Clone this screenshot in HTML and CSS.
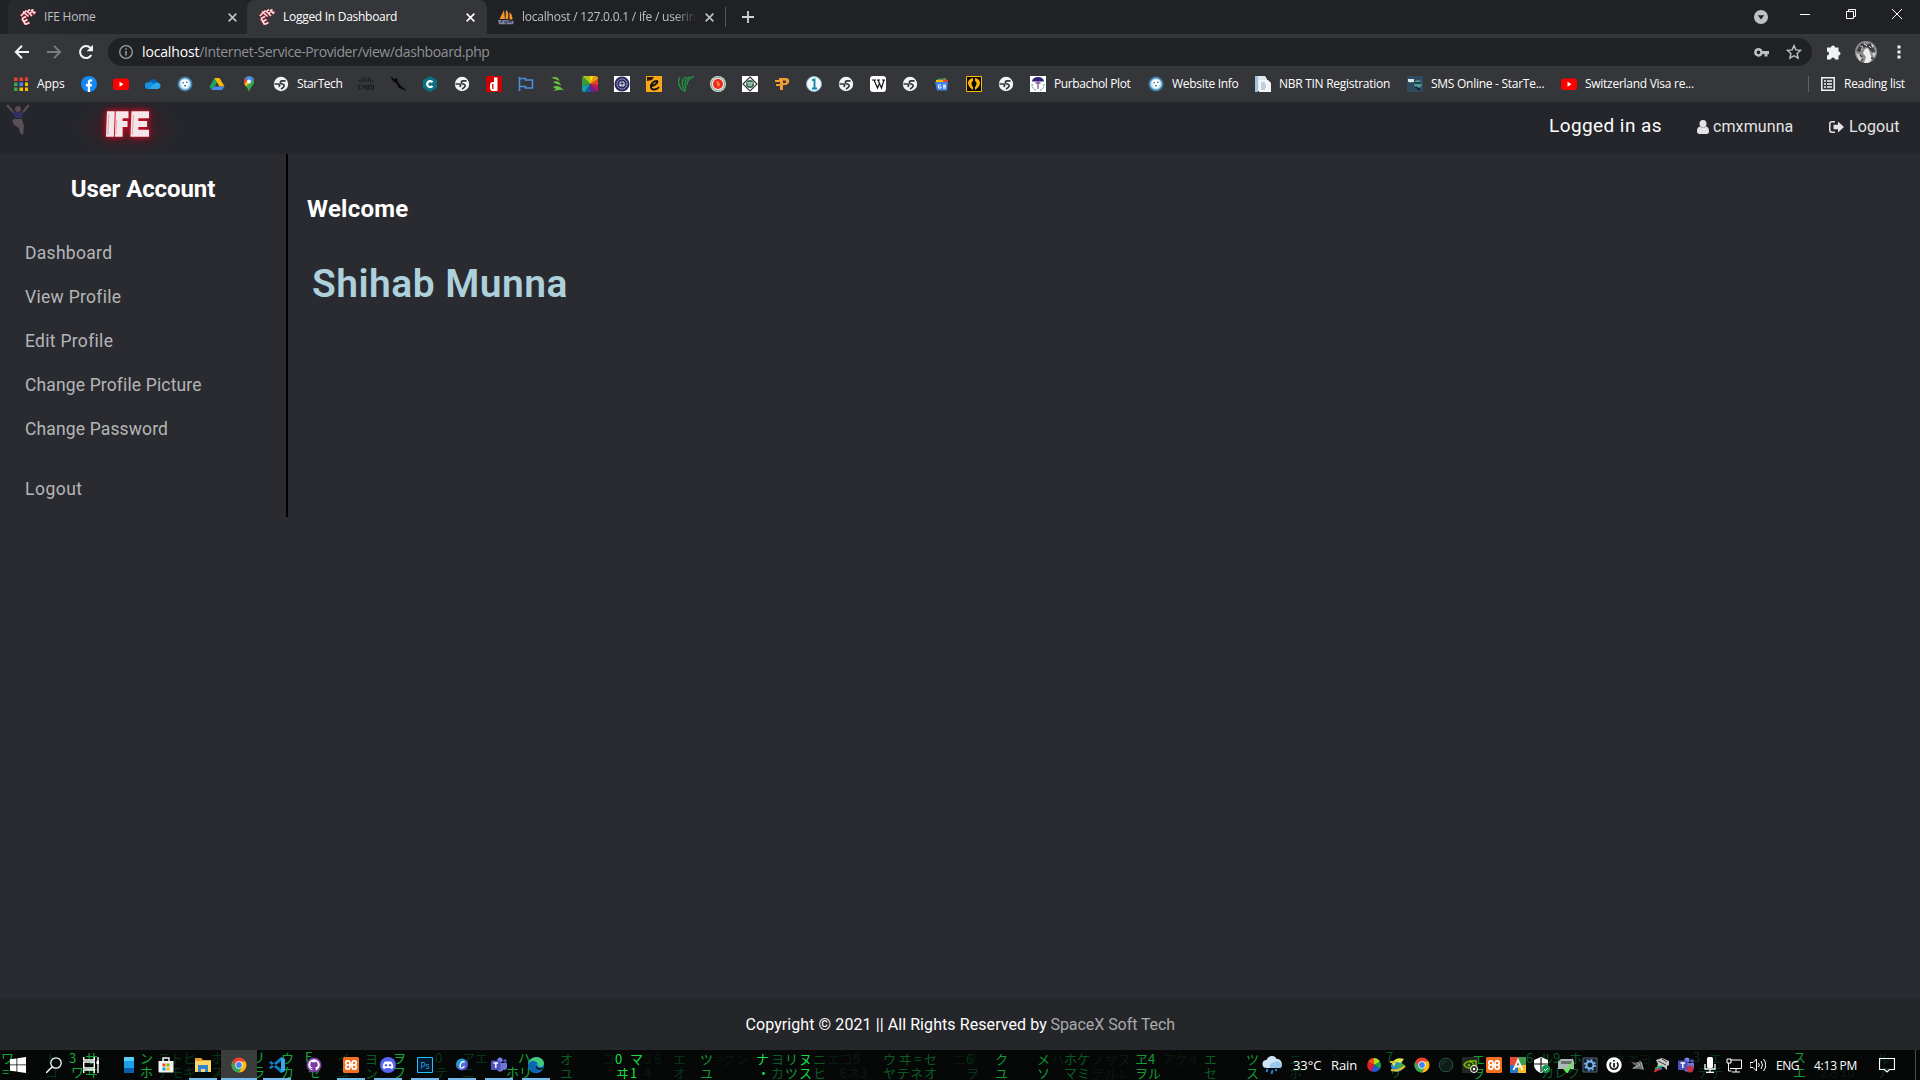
FILE: index.html
```html
<!DOCTYPE html>
<html lang="en">
<head>
<meta charset="utf-8">
<title>Logged In Dashboard</title>
<link rel="stylesheet" href="styles.css">
</head>
<body>
<svg class="defs" width="0" height="0" aria-hidden="true">
  <symbol id="ife" viewBox="0 0 16 16"><g fill="none" stroke="#8a1d29" stroke-width="3.200"><path d="M.8 7L6.500 1.500M3 2.500l5.500 5M7 2l5 5M7.500 2.500L10 .5M9.500 5l2-2M11 1l4 4M11.500 1.500l2-1M13 4l2.500-1M2 9.500l3.500 6M2 9.500l4-2M4 12.500l3.500-2M5.500 15.500l4-2"/></g><g fill="none" stroke="#f8e3e4" stroke-width="1.600"><path d="M.8 7L6.500 1.500M3 2.500l5.500 5M7 2l5 5M7.500 2.500L10 .5M9.500 5l2-2M11 1l4 4M11.500 1.500l2-1M13 4l2.500-1M2 9.500l3.500 6M2 9.500l4-2M4 12.500l3.500-2M5.500 15.500l4-2"/></g></symbol>
  <symbol id="x" viewBox="0 0 10 10"><path d="M1.500 1.500l7 7M8.500 1.500l-7 7" stroke="currentColor" stroke-width="1.500" fill="none"/></symbol>
  <symbol id="globe" viewBox="0 0 16 16"><circle cx="8" cy="8" r="7.200" fill="#f1f3f4"/><path d="M12.500 4.800H9.300C7.500 4.800 6.500 6.500 8 7.500c1.500.8 3.200.7 3.200 2.300 0 1.500-1.500 2.200-3.200 3.200" fill="none" stroke="#35363a" stroke-width="1.700"/><path d="M1.500 8h3.800c1.700.2 2 2 .2 2.600" fill="none" stroke="#35363a" stroke-width="1.700"/></symbol>
  <symbol id="yt" viewBox="0 0 16 16"><rect y="2.500" width="16" height="11.500" rx="2.500" fill="#f00"/><path d="M6.500 5.700v5l4-2.500z" fill="#fff"/></symbol>
  <symbol id="orb" viewBox="0 0 16 16"><circle cx="8" cy="8" r="7.500" fill="#3c7ba9"/><circle cx="8" cy="8" r="5.800" fill="#b9dff0"/><path d="M4 5l3-1.500 4 .5 1 4-2.500 4.500L5 11z" fill="#fff"/><path d="M5.500 6h1.500v1.500H5.500zM9 5.500h1.500V7H9zM7 9h2v1.500H7z" fill="#51829c"/></symbol>
  <symbol id="chrome" viewBox="0 0 16 16"><circle cx="8" cy="8" r="7.500" fill="#ea4335"/><path d="M1.500 4.250A7.500 7.500 0 0 0 8 15.500L11.200 9.900 4.800 9.900Z" fill="#34a853"/><path d="M8 15.500A7.500 7.500 0 0 0 14.500 4.500H8L11.250 9.900Z" fill="#fbbc05"/><circle cx="8" cy="8" r="3.700" fill="#fff"/><circle cx="8" cy="8" r="2.900" fill="#4285f4"/></symbol>
  <symbol id="xampp" viewBox="0 0 16 16"><rect width="16" height="16" rx="1.500" fill="#f37021"/><path d="M8 8H4.800a2.100 2.100 0 1 1 2.100-2.600v5.200A2.100 2.100 0 1 1 4.800 8M8 8h3.200a2.100 2.100 0 1 0-2.100-2.600v5.200A2.100 2.100 0 1 0 11.200 8" stroke="#fff" stroke-width="1.700" fill="none"/></symbol>
  <symbol id="teams" viewBox="0 0 16 16"><circle cx="9" cy="3" r="2.600" fill="#7b83eb"/><circle cx="14" cy="4" r="1.800" fill="#5059c9"/><path d="M6 6h7v6a4 4 0 0 1-7 1zM13 6h3v4a3 3 0 0 1-3 3z" fill="#7077d6"/><rect y="3.500" width="9.500" height="9.500" rx="1" fill="#4b53bc"/><path d="M2.500 6h4.600M4.800 6v5" stroke="#fff" stroke-width="1.400"/></symbol>
</svg>

<div class="browser">
  <div class="tabstrip">
    <div class="tab first"><svg class="fav"><use href="#ife"/></svg><span class="title t1">IFE Home</span><svg class="close"><use href="#x"/></svg></div>
    <div class="tab active"><svg class="fav"><use href="#ife"/></svg><span class="title t2">Logged In Dashboard</span><svg class="close"><use href="#x"/></svg></div>
    <div class="tab third"><svg class="fav" viewBox="0 0 16 16"><path d="M6 1l1 9H1.500zM8 1c3 2 2.500 6 2 9H7.500zM11.500 3c2.500 2 3 5 3 7.500h-3z" fill="#f0952a"/><path d="M0 11l16 .2-1 4H1z" fill="#8084a6"/><path d="M3 14v-2h2M7 12v2h2v-2M11 14v-2h2v2" stroke="#33364e" fill="none"/></svg><span class="title t3">localhost / 127.0.0.1 / ife / userinfo</span><svg class="close"><use href="#x"/></svg></div>
    <span class="tabline"></span>
    <svg class="plus" viewBox="0 0 12 12"><path d="M6 0v12M0 6h12" stroke="#d0d2d5" stroke-width="1.800"/></svg>
    <div class="winctl">
      <svg class="wc1" viewBox="0 0 14 14"><circle cx="7" cy="7" r="7" fill="#bdc1c6"/><path d="M3.800 5.200h6.400L7 9.500z" fill="#202124"/></svg>
      <svg class="wc2" viewBox="0 0 10 10"><path d="M0 5.500h10" stroke="#fff"/></svg>
      <svg class="wc3" viewBox="0 0 10 10"><path d="M.5 2.500h7v7h-7zM2.500 2.500v-2h7v7h-2" stroke="#fff" fill="none"/></svg>
      <svg class="wc4" viewBox="0 0 10 10"><path d="M0 0l10 10M10 0L0 10" stroke="#fff"/></svg>
    </div>
  </div>

  <div class="toolbar">
    <svg class="nav" viewBox="0 0 16 16"><path d="M15 8H2M8 1.800L1.800 8 8 14.200" fill="none" stroke="#f1f3f4" stroke-width="2"/></svg>
    <svg class="nav" viewBox="0 0 16 16"><path d="M1 8h13M8 1.800L14.200 8 8 14.200" fill="none" stroke="#7b7c7f" stroke-width="1.800"/></svg>
    <svg class="nav" viewBox="0 0 16 16"><path d="M13.300 11A6 6 0 1 1 12.500 4" fill="none" stroke="#f1f3f4" stroke-width="2.100"/><path d="M15 .8v6.400H8.600z" fill="#f1f3f4"/></svg>
    <div class="omnibox">
      <svg class="info" viewBox="0 0 14 14"><circle cx="7" cy="7" r="6.300" fill="none" stroke="#9aa0a6" stroke-width="1.300"/><path d="M7 6v4.500M7 3.300v1.500" stroke="#9aa0a6" stroke-width="1.500"/></svg>
      <span class="url"><b>localhost</b>/Internet-Service-Provider/view/dashboard.php</span>
      <svg class="key" viewBox="0 0 15 9"><path fill-rule="evenodd" d="M4.500 0a4.300 4.300 0 0 1 4 2.900H15v3h-1.500V8.500h-3V5.900h-2A4.300 4.300 0 1 1 4.500 0zm0 2.600a1.800 1.800 0 1 0 0 3.600 1.800 1.800 0 0 0 0-3.600z" fill="#bdc1c6"/></svg>
      <svg class="star" viewBox="0 0 16 16"><path d="M8 1.600l1.900 4.300 4.700.5-3.500 3.100 1 4.600L8 11.700l-4.100 2.400 1-4.600-3.500-3.100 4.700-.5z" fill="none" stroke="#bdc1c6" stroke-width="1.400"/></svg>
    </div>
    <svg class="puzzle" viewBox="0 0 16 16"><path d="M1 3.500h4a2 2 0 1 1 4 0h3.500v4a2 2 0 1 1 0 4v4H9a2 2 0 0 0-4 0H1v-4a2 2 0 0 0 0-4z" fill="#f1f3f4"/></svg>
    <svg class="avatar" viewBox="0 0 22 22"><clipPath id="av"><circle cx="11" cy="11" r="11"/></clipPath><g clip-path="url(#av)"><path d="M0 0h22v22H0z" fill="#8b8d8d"/><path d="M4 5l3-3 4 2 5-2 3 5-1 5-3-3-3-3-4 1-3 4-3-1z" fill="#3c3e3f"/><path d="M10 8l3-1 2 5 2 6-3 4-5 0 2-6-3-4z" fill="#eeeeec"/><path d="M1 12l4 2 3 6-4 0zM16 2l3 3-2 2zM17 12l4 0-2 4" fill="#d0d1d0"/><path d="M5 14l2 2M2 9l3 1M18 9l2 1M16 17l3 1M6 20l2-2" stroke="#3c3e3f" stroke-width="1.500"/><path d="M5 5l3 1-2 3M9 3l3 2M14 5l2 2" fill="none" stroke="#ccc"/></g></svg>
    <svg class="dots" viewBox="0 0 4 16"><path d="M.5 1.500h3v3h-3zM.5 6.500h3v3h-3zM.5 11.500h3v3h-3z" fill="#f1f3f4"/></svg>
  </div>

  <div class="bookmarks">
    <div class="bm"><svg viewBox="0 0 16 16"><path d="M1 1.500h3.500V5H1zM6.500 1.500H10V5H6.500zM12 1.500h3V5h-3z" fill="#e94235"/><path d="M1 6.500h3.500V10H1zM1 11.500h3.500V15H1z" fill="#34a853"/><path d="M6.500 6.500H10V10H6.500z" fill="#4285f4"/><path d="M12 6.500h3V10h-3zM6.500 11.500H10V15H6.500zM12 11.500h3V15h-3z" fill="#fbbc05"/></svg><span class="w-apps">Apps</span></div>
    <svg viewBox="0 0 16 16"><circle cx="8" cy="8" r="8" fill="#1488f5"/><path d="M6.800 16v-5.600H4.900V8h1.900V6.400c0-2 1.100-3.100 2.900-3.100l1.500.1v2h-.9c-.9 0-1.200.5-1.200 1.200V8H11l-.4 2.400H9.100V16z" fill="#fff"/></svg>
    <svg><use href="#yt"/></svg>
    <svg viewBox="0 0 16 16"><path d="M4 6a4.300 4.300 0 0 1 8-.5L9 10z" fill="#0364b8"/><path d="M3 13a3.300 3.300 0 0 1 0-6.700l3-.3 7 4-5 3z" fill="#1490df"/><path d="M8 9l3-2.600A3.400 3.400 0 1 1 13 13H4z" fill="#28a8ea"/></svg>
    <svg><use href="#orb"/></svg>
    <svg viewBox="0 0 16 16"><path d="M5.500 2h5L5 11.500 2.800 14 .5 10.500z" fill="#1ea362"/><path d="M5.500 2h5l5 8.500h-5z" fill="#ffba00"/><path d="M5.300 10.500h10.200L13 14H2.800z" fill="#4688f4"/></svg>
    <svg viewBox="0 0 16 16"><path d="M8 .3a5.200 5.200 0 0 0-5 6.500C3.500 9 7 12 8 15.700c1-3.700 4.500-6.700 5-8.900A5.200 5.200 0 0 0 8 .3z" fill="#34a853"/><path d="M3 7a5.300 5.300 0 0 1 1-5L8 5.500 4.500 10z" fill="#ea4335"/><path d="M4 2a5.200 5.200 0 0 1 5.500-1.500L6 5z" fill="#4285f4"/><path d="M9.500.5A5.300 5.300 0 0 1 12.700 3L4.900 10.500 3.500 8z" fill="#fbbc05"/><path d="M9.500.5A5.300 5.300 0 0 1 12.700 3L9.500 7 6 5z" fill="#4285f4"/><circle cx="8" cy="5.500" r="1.900" fill="#fff"/></svg>
    <div class="bm"><svg><use href="#globe"/></svg><span class="w-star">StarTech</span></div>
    <svg viewBox="0 0 16 16"><path d="M1 4v2M3.300 2.500v3.500M5.600 1v5M8 3v3M10.300 1v5M12.600 2.500v3.500M15 4v2" stroke="#1c1d1f" stroke-width="1.100"/><path d="M3 9.500H1V13h2M5 9v4M9 9.500H7v1.700h2V13H7M12.500 9.500h-2V13h2M13.500 9.500h2V13h-2z" fill="none" stroke="#1c1d1f" stroke-width="1.200"/></svg>
    <svg viewBox="0 0 16 16"><path d="M0 0l4 3 3-1 1 4 3 4 4 3 1 2-4-2-3-1-2-4-4-3z" fill="#090909"/></svg>
    <svg viewBox="0 0 16 16"><path d="M8 0l7 4v8l-7 4-7-4V4z" fill="#0b7084"/><path d="M10.500 6.200A3 3 0 1 0 10.500 10" fill="none" stroke="#fff" stroke-width="2.200"/></svg>
    <svg><use href="#globe"/></svg>
    <svg viewBox="0 0 16 16"><path d="M0 0h16v16H0z" fill="#d00000"/><path d="M8 1.500h3.500V15H8zM8 6C4 5.500 4 8 4 10.500S4 15 8 15z" fill="#fff"/><path d="M6.800 8v5" stroke="#d00000" stroke-width="1.300"/></svg>
    <svg viewBox="0 0 16 16"><path d="M1.500 1v14M1.500 2.500h6v1.500h7v8h-7v-1.500h-6" fill="none" stroke="#4f8edb" stroke-width="1.600"/></svg>
    <svg viewBox="0 0 16 16"><path d="M1 1.500c5-1.500 8 0 8.500 3.500-3-2-5-1.500-8.500-3.500zM3 6c4-2 7 0 8 3.500C8 8 6 8 3 6zM3 11c4-2.500 8 0 11 3.500-4-1.500-6 0-11 .5l3-2z" fill="#6cc23c"/></svg>
    <svg viewBox="0 0 16 16"><clipPath id="r"><rect width="16" height="16" rx="2.500"/></clipPath><g clip-path="url(#r)"><path d="M0 0h8v8z" fill="#a9c51c"/><path d="M0 0l8 8-8 2z" fill="#3a9b35"/><path d="M0 10l8-2-5 8H0z" fill="#12a2a5"/><path d="M8 8L3 16h6z" fill="#1f57a7"/><path d="M8 8l1 8h7z" fill="#6b257f"/><path d="M8 8l8 8V9z" fill="#c4145c"/><path d="M8 8l8 1V3z" fill="#e7441c"/><path d="M8 8l8-5V0h-4z" fill="#f49b13"/><path d="M8 8l4-8H8z" fill="#fbd80a"/></g></svg>
    <svg viewBox="0 0 16 16"><path d="M0 0h16v16H0z" fill="#fff"/><circle cx="8" cy="8" r="7.500" fill="#28295f"/><circle cx="8" cy="8" r="5" fill="none" stroke="#c9cbe0" stroke-dasharray="1.500 .6"/><path d="M5 9h6M6 6h4v4H6z" stroke="#fff" fill="none" stroke-width=".8"/></svg>
    <svg viewBox="0 0 16 16"><path d="M0 0h16v16H0z" fill="#f9a61a"/><path d="M1 1h7L6 4 1 5z" fill="#2a1b09"/><path d="M5.500 10c5-1 7.500-5 5-5S4 8 5 11.500s6 2 8-.5" fill="none" stroke="#141414" stroke-width="1.900"/></svg>
    <svg viewBox="0 0 16 16"><path d="M8 15.500C1 13-1 6 2 1M8 14C3 10 3 4 8 .8M8 12C5.500 6 8 2 12 .8M9 9c0-4 2-7 7-8.500" fill="none" stroke="#219642" stroke-width="1.300"/></svg>
    <svg viewBox="0 0 16 16"><circle cx="8" cy="8" r="8" fill="#e5e3d7"/><circle cx="8" cy="8" r="6.700" fill="none" stroke="#247353" stroke-dasharray="1.200 .8"/><circle cx="8" cy="8" r="5" fill="#ee2722"/><path d="M6.500 5l2 .5 1.500 3-1 2.500-2-2z" fill="#f6842a"/></svg>
    <svg viewBox="0 0 16 16"><path d="M0 0h16v16H0z" fill="#fff"/><path d="M8 1l7 7-7 7-7-7z" fill="none" stroke="#333" stroke-width="1.200"/><circle cx="8" cy="8" r="4" fill="#376d51"/><path d="M5 7h6M6 9h4" stroke="#fff"/></svg>
    <svg viewBox="0 0 16 16"><path d="M5 2h7c5 0 4 7-1 7H9v5H6V6H1V4h4zm4 2.500v2.500h2c1.500 0 1.500-2.500 0-2.500zM2 8h4v2H2z" fill="#f29c34" fill-rule="evenodd"/></svg>
    <svg viewBox="0 0 16 16"><circle cx="8" cy="8" r="7.500" fill="#f4f8fa" stroke="#7bb8cc"/><path d="M6 4.500l2-1h.5V12M6 12.500h5" fill="none" stroke="#1386ad" stroke-width="1.900"/></svg>
    <svg><use href="#globe"/></svg>
    <svg viewBox="0 0 16 16"><rect width="16" height="16" rx="3" fill="#fff"/><path d="M2 4h4M7 4h3M12 4h3M4 4l3.500 8L9.500 7.500M8 4l3.500 8L14 4" fill="none" stroke="#111" stroke-width="1.200"/></svg>
    <svg><use href="#globe"/></svg>
    <svg viewBox="0 0 16 16"><path d="M3 3l9-1 1 7H4z" fill="#34a853"/><path d="M8 3l6 1-1 5H8z" fill="#ea4335"/><path d="M2 4h7v5H2z" fill="#fbbc05"/><path d="M1 6h13l-1 8.500H3z" fill="#3f83f1"/><path d="M7 9H4.500v3H7v-1.500M9 9h3M9 10.500h3M9 12h3" stroke="#fff" fill="none"/></svg>
    <svg viewBox="0 0 16 16"><path d="M.5.500h15v15H.5z" fill="#090909" stroke="#fcba03"/><path d="M7 2C2 3 1 7 3 10s3 3 4 4V11C5 9 5 6 7 5zM9 2c5 1 6 5 4 8s-3 3-4 4v-3c2-2 2-5 0-6z" fill="#fdb801"/></svg>
    <svg><use href="#globe"/></svg>
    <div class="bm"><svg viewBox="0 0 16 16"><path d="M0 0h16v16H0z" fill="#fff"/><path d="M2 5.500a6 4.500 0 0 1 12 0z" fill="#342276"/><path d="M8 5v8M5.500 7h5" stroke="#86549f" stroke-width="1.300"/><path d="M2 8c0 4 2 6 5 6.500M14 8c0 4-2 6-5 6.500" fill="none" stroke="#4ca574" stroke-dasharray="2 1"/></svg><span class="w-purb">Purbachol Plot</span></div>
    <div class="bm"><svg><use href="#orb"/></svg><span class="w-web">Website Info</span></div>
    <div class="bm"><svg viewBox="0 0 16 16"><path d="M0 0h10l2 3v12H0z" fill="#dfe9f3"/><path d="M4 4h9l3 3v9H4z" fill="#f2f6fa"/><path d="M0 0h3v16H0z" fill="#a5c1dc"/><path d="M6 7h4M6 9h5M6 11h5M6 13h4" stroke="#91abc2"/></svg><span class="w-nbr">NBR TIN Registration</span></div>
    <div class="bm"><svg viewBox="0 0 16 16"><path d="M0 0h16v16H0z" fill="#2f4b60"/><path d="M1 3h6v3H4L3 7V6H1z" fill="#dce6e9"/><circle cx="11" cy="8" r="3.800" fill="#4e9a96"/><path d="M7.500 7h7M8.500 11l5 3" stroke="#14242d" stroke-width="1.500"/></svg><span class="w-sms">SMS Online - StarTe...</span></div>
    <div class="bm"><svg><use href="#yt"/></svg><span class="w-swiss">Switzerland Visa re...</span></div>
    <div class="reading"><svg viewBox="0 0 16 16"><path d="M1.800 1.800h12.400v12.400H1.800z" fill="none" stroke="#f1f3f4" stroke-width="1.500"/><path d="M4 5h2M7 5h5M4 8h2M7 8h5M4 11h2M7 11h5" stroke="#f1f3f4" stroke-width="1.600"/></svg><span class="w-read">Reading list</span></div>
  </div>
</div>

<div class="page">
  <header class="header">
    <svg class="jumper" viewBox="0 0 24 34"><path d="M1 1l7 8M23 1l-7 8" stroke="#5d4c54" stroke-width="2.200"/><circle cx="12" cy="5" r="3" fill="#594b50"/><path d="M6 7l3 1h6l3-1-2 7H9z" fill="#30315f"/><path d="M9 15h7l2 7-1 9-3-2-1-5-5-3-2-5z" fill="#5b5058"/></svg>
    <span class="logo"><svg viewBox="0 0 46 28"><g fill="#f6e6e9"><path d="M1 1h8l-1 26H0z"/><path d="M10 1h13v7h-6v3h5v6h-5v10H9z"/><path d="M26 1h18v7H33v3h9v6h-9v3h11v7H25z"/></g><path d="M3 3l-1 22M11 10l-1 15M28 5l-1 20" stroke="#c99aa3" stroke-width=".8"/></svg></span>
    <div class="session">
      <span class="logged">Logged in as</span>
      <span class="user"><svg viewBox="0 0 12 14"><path d="M6 0a3.500 3.800 0 0 1 0 7.600A3.500 3.800 0 0 1 6 0zM2.800 6.500a5 5 0 0 0 6.400 0C11.500 7 12 9 12 11.500c0 1.500-1 2.500-2.200 2.500H2.200C1 14 0 13 0 11.500 0 9 .5 7 2.800 6.500z" fill="#e4e4e4"/></svg><span class="uname">cmxmunna</span></span>
      <span class="out"><svg viewBox="0 0 15 12"><path d="M6 .8H3A2.200 2.200 0 0 0 .8 3v6A2.200 2.200 0 0 0 3 11.200h3" fill="none" stroke="#e4e4e4" stroke-width="1.500"/><path d="M4.500 3.700H9V.5L15 6l-6 5.500V8.300H4.500z" fill="#e4e4e4"/></svg><span class="oname">Logout</span></span>
    </div>
  </header>
  <main class="main">
    <nav class="sidebar">
      <h3><span>User Account</span></h3>
      <ul><li>Dashboard</li><li>View Profile</li><li>Edit Profile</li><li class="tight">Change Profile Picture</li><li class="tight">Change Password</li><li class="last">Logout</li></ul>
    </nav>
    <section class="content"><h3>Welcome</h3><h1>Shihab Munna</h1></section>
  </main>
  <footer class="footer"><span class="copy">Copyright © 2021 || All Rights Reserved by</span><span class="brand">SpaceX Soft Tech</span></footer>
</div>

<div class="taskbar">
  <svg class="rain" viewBox="0 0 1920 30">
    <g fill="#14a83b"><text x="1" y="13">ワ</text><text x="2" y="27">=</text><text x="69" y="13">3</text><text x="71" y="27">ワ</text><text x="85" y="13">サ</text><text x="85" y="27">ヰ</text><text x="140" y="13">ン</text><text x="140" y="27">ホ</text><text x="252" y="12">リ</text><text x="252" y="27">ラ</text><text x="281" y="13">ウ</text><text x="281" y="27">カ</text><text x="305" y="12">E</text><text x="308" y="27">セ</text><text x="393" y="13">ヲ</text><text x="393" y="27">フ</text><text x="506" y="27">ホ</text><text x="518" y="13">ハ</text><text x="519" y="27">リ</text></g>
    <g fill="#16df43"><text x="615" y="14">0</text><text x="630" y="14">マ</text><text x="616" y="28">ヰ</text><text x="630" y="28">1</text><text x="756" y="14">ナ</text><text x="757" y="28">・</text><text x="799" y="14">ヌ</text><text x="799" y="28">ス</text></g>
    <g fill="#129b37"><text x="700" y="14">ツ</text><text x="700" y="28">ユ</text><text x="785" y="14">リ</text><text x="785" y="28">ツ</text><text x="995" y="14">ク</text><text x="995" y="28">ユ</text><text x="1037" y="14">メ</text><text x="1037" y="28">ソ</text><text x="1135" y="14">ヱ</text><text x="1148" y="14">4</text><text x="1135" y="28">ヲ</text><text x="1148" y="28">ル</text><text x="1246" y="14">ツ</text><text x="1246" y="28">ス</text><text x="1472" y="14">エ</text><text x="1472" y="28">ヲ</text><text x="1793" y="12">ス</text><text x="1793" y="27">エ</text></g>
    <g fill="#0b5b25"><text x="365" y="14">ヨ</text><text x="365" y="28">ン</text><text x="560" y="14">オ</text><text x="560" y="28">ユ</text><text x="771" y="14">ヨ</text><text x="771" y="28">カ</text><text x="813" y="14">ニ</text><text x="813" y="28">ヒ</text><text x="883" y="14" textLength="54">ウヰ=セ</text><text x="883" y="28" textLength="54">ヤテネオ</text><text x="1064" y="14">ホケ</text><text x="1064" y="28">マミ</text><text x="1204" y="14">エ</text><text x="1204" y="28">セ</text><text x="1386" y="12">7</text><text x="1389" y="27">リ</text><text x="1526" y="13">6</text><text x="1540" y="13">ル9</text><text x="1541" y="27">カレク</text><text x="1569" y="13">ホ</text></g>
    <g fill="#08331a"><text x="45" y="13">ト</text><text x="45" y="27">コ</text><text x="157" y="13">ストヒ</text><text x="157" y="27">ナモキ</text><text x="211" y="13">ホ</text><text x="211" y="27">ス</text><text x="337" y="13">イ</text><text x="337" y="27">ユ</text><text x="435" y="13">0</text><text x="435" y="27">テ</text><text x="462" y="13">アエ</text><text x="462" y="27">ニ</text><text x="673" y="14">エ</text><text x="673" y="28">オ</text><text x="966" y="14">6</text><text x="966" y="28">ヲ</text><text x="1289" y="14">ニ</text><text x="1289" y="28">ホ</text><text x="1693" y="12">3</text><text x="1709" y="13">エ</text><text x="1697" y="27">テテ</text><text x="1877" y="13">ル</text><text x="1877" y="27">ア</text></g>
    <g fill="#061b0e"><text x="602" y="14">コ</text><text x="644" y="14">3 6</text><text x="644" y="28">4</text><text x="715" y="14">=クン</text><text x="827" y="14">エコ5</text><text x="840" y="28">6ネ3</text><text x="953" y="14">ニ 9</text><text x="1051" y="14">ハ</text><text x="1092" y="14">ノサヌ</text><text x="1092" y="28">テルレ</text><text x="1162" y="14">アクイ</text><text x="1330" y="14">ミニ</text><text x="1600" y="14">ハウオヨ</text><text x="1820" y="27">2オ10</text></g>
  </svg>
  <div class="launch">
    <i class="sys"><svg viewBox="0 0 16 16"><path d="M0 2.300L6.500 1.400V7.500H0zM7.300 1.300L16 0v7.500H7.300zM0 8.300h6.500v6.200L0 13.700zM7.300 8.300H16V16l-8.700-1.300z" fill="#fff"/></svg></i>
    <i class="sys"><svg viewBox="0 0 16 16"><circle cx="10" cy="6" r="5.200" fill="none" stroke="#fff" stroke-width="1.300"/><path d="M6.300 9.700L0 16" stroke="#fff" stroke-width="1.400"/></svg></i>
    <i class="sys"><svg viewBox="0 0 16 16"><path d="M.7 0v3h10.600V0M.7 16v-3h10.600v3M.7 5h10.600v6H.700zM15 0v16" fill="none" stroke="#fff" stroke-width="1.400"/><path d="M13.500 4h3v3h-3z" fill="#fff"/></svg></i>
    <i><svg viewBox="0 0 16 16"><path d="M3 0h10v16H3z" fill="#1a9ee5"/><path d="M3 0h10v4H3z" fill="#51d0f4"/><path d="M3 11h10v5H3z" fill="#095eac"/></svg></i>
    <i><svg viewBox="0 0 16 16"><path d="M.5 4h15v10.500a1 1 0 0 1-1 1h-13a1 1 0 0 1-1-1z" fill="#f4f4f4"/><path d="M5 4V1h6v3" fill="none" stroke="#f4f4f4" stroke-width="1.500"/><path d="M4.500 6.500h3v3h-3z" fill="#f25022"/><path d="M8.500 6.500h3v3h-3z" fill="#7fba00"/><path d="M4.500 10.500h3v3h-3z" fill="#00a4ef"/><path d="M8.500 10.500h3v3h-3z" fill="#ffb900"/></svg></i>
    <i class="run"><svg viewBox="0 0 16 16"><path d="M0 1h6l2 2h8v12H0z" fill="#e5a52a"/><path d="M0 4h16v11H0z" fill="#ffd766"/><path d="M3 15V8h10v7h-3v-3H6v3z" fill="#3582cf"/></svg></i>
    <i class="run current"><svg><use href="#chrome"/></svg></i>
    <i class="run"><svg viewBox="0 0 16 16"><path d="M12 0l4 2v12l-4 2z" fill="#35a7ed"/><path d="M12 0v4L2 12 0 10.500zM12 16v-4L2 4 0 5.500z" fill="#117ec5"/></svg></i>
    <i><svg viewBox="0 0 16 16"><circle cx="8" cy="8" r="7.500" fill="#7d3ba4"/><circle cx="8" cy="8" r="5.800" fill="#fff"/><path d="M5 4.500l1.500.8h3l1.500-.8.3 1.700c1.200 2 .2 4-2 4.300.5.600.4 2 .4 3.500H6.300v-2c-1.500.2-1.800-1-2.300-1.500 1 0 1.300.8 2.300.5l.4-.6C4.500 10 3.500 8 4.700 6.200z" fill="#7d3ba4"/></svg></i>
    <i class="run"><svg><use href="#xampp"/></svg></i>
    <i class="run"><svg viewBox="0 0 16 16"><circle cx="8" cy="8" r="8" fill="#5865f2"/><path d="M5 4.500h6c2 2 2.500 4 2.300 6.500L11 12l-.7-1H5.700L5 12l-2.300-1C2.500 8.500 3 6.500 5 4.500z" fill="#fff"/><circle cx="6" cy="8.200" r="1.200" fill="#5865f2"/><circle cx="10" cy="8.200" r="1.200" fill="#5865f2"/></svg></i>
    <i class="run"><svg viewBox="0 0 16 16"><path d="M.5.500h15v15H.5z" fill="#001c31" stroke="#26c2fa"/><text class="ps" x="3.500" y="11.500">Ps</text></svg></i>
    <i class="run"><svg viewBox="0 0 16 16"><linearGradient id="cv" x2="1" y2="1"><stop stop-color="#08c5d2"/><stop offset="1" stop-color="#742ce2"/></linearGradient><circle cx="8" cy="7.500" r="6" fill="url(#cv)"/><path d="M10.500 5.500C9 3 6 6 6 9s3 2.500 4.500 0" fill="none" stroke="#fff" stroke-width="1.300"/></svg></i>
    <i class="run"><svg><use href="#teams"/></svg></i>
    <i class="run"><svg viewBox="0 0 16 16"><circle cx="8" cy="8" r="8" fill="#158dd3"/><path d="M0 8C1-2 15-2 16 6c0 3-3 4-6 3 1-5-5-6-10-1z" fill="#43ca78"/><path d="M0 8c1-5 9-5 9-1-3 0-3 6 4 5.500-3 4-8 4-10 1z" fill="#0b65b5"/><path d="M8 8c1 3 4 4 8 2l-3 3c-5 0-6-3-5-5z" fill="#071517"/></svg></i>
  </div>
  <div class="tray">
    <svg class="weather" viewBox="0 0 20 20"><path d="M4 13a4 4 0 0 1 0-8c2-5 9-5 10-1 5-1 8 7 2 9z" fill="#cfe4f5"/><path d="M8 13c-2-4 1-6 3-5 1-3 8-2 7 1 3 1 1 4-1 4z" fill="#9dc8ec"/><path d="M5 14l-1 3M14 14l-1 2M10 15l-1 4" stroke="#238de5" stroke-width="1.800"/></svg>
    <span class="temp">33°C</span><span class="sky">Rain</span>
    <div class="icons">
      <svg viewBox="0 0 16 16"><path d="M8 8V1a7 7 0 0 1 6 4z" fill="#a6e11b"/><path d="M8 8l6-3a7 7 0 0 1 0 7z" fill="#18a34d"/><path d="M8 8l6 4a7 7 0 0 1-9 2z" fill="#2855dc"/><path d="M8 8l-3 6.500A7 7 0 0 1 2 5z" fill="#df1b2e"/><path d="M8 8L2 5a7 7 0 0 1 6-4z" fill="#f84d19"/></svg>
      <svg viewBox="0 0 16 16"><circle cx="7" cy="9" r="6" fill="#2c89d5"/><path d="M2 6c4-6 8-5 12-4l-3 4-5-1-2 5z" fill="#dce94b"/><path d="M6 9l4-3 5 2-5 5z" fill="#39ad50"/><path d="M0 5h5M1 13c5 1 10 0 14-4" stroke="#e6bd23" stroke-width="2" fill="none"/></svg>
      <svg><use href="#chrome"/></svg>
      <svg viewBox="0 0 16 16"><circle cx="8" cy="8" r="6.800" fill="#101c19" stroke="#28564a"/><path d="M4 8a4 4 0 0 1 4-4" fill="none" stroke="#24443a"/></svg>
      <svg viewBox="0 0 16 16"><path d="M0 0h16v16H0z" fill="#242624"/><path d="M2 8c3-5 8-4 10 0-3 4-7 4-10 0zM7 4h7v7" fill="none" stroke="#76b900" stroke-width="1.500"/><circle cx="7" cy="8" r="1.500" fill="#76b900"/><circle cx="12" cy="12" r="3.500" fill="#222" stroke="#fff"/><circle cx="12" cy="12" r="1.300" fill="#fff"/></svg>
      <svg><use href="#xampp"/></svg>
      <svg viewBox="0 0 16 16"><path d="M0 0h8v8H0z" fill="#ec4734"/><path d="M8 0h8v8H8z" fill="#3e9e4e"/><path d="M0 8h8v8H0z" fill="#2876cb"/><path d="M8 8h8v8H8z" fill="#f9bd22"/><path d="M3.500 13L8 3l4.500 10M5 9.500h6" fill="none" stroke="#fff" stroke-width="1.800"/></svg>
      <svg viewBox="0 0 16 16"><path d="M7 0l7 3v5c0 4-4 7-7 8-3-1-7-4-7-8V3z" fill="#fff"/><path d="M7 1v14M0 7h14" stroke="#0c0e0d" stroke-width="1.200"/><circle cx="12" cy="12" r="4" fill="#169750"/><path d="M10 12l1.500 1.500L14 11" fill="none" stroke="#fff"/></svg>
      <svg viewBox="0 0 16 16"><path d="M0 5l3-3h12l1 3v7H0z" fill="#aeb8b6"/><path d="M3 4h11l-1 3H3z" fill="#68716d"/><path d="M6 11l3 3.500L15 6" fill="none" stroke="#6ae85b" stroke-width="2.600"/></svg>
      <svg viewBox="0 0 16 16"><path d="M1 1h14v14H1z" fill="#131e2c" stroke="#566579"/><circle cx="8" cy="8" r="3.500" fill="none" stroke="#79b7f5" stroke-width="2"/><circle cx="8" cy="8" r="5.200" fill="none" stroke="#79b7f5" stroke-width="1.600" stroke-dasharray="2 2.080"/></svg>
      <svg viewBox="0 0 16 16"><circle cx="8" cy="8" r="7.700" fill="#fff"/><path d="M5 5.500a4 4 0 1 0 6 0M8 3v1.500M8 6v4.500" fill="none" stroke="#111" stroke-width="1.700"/></svg>
      <svg viewBox="0 0 16 16"><path d="M1 5l7 1 2-3 2 3 2 7-5-1-7 0 4-3z" fill="#6d6e70"/><path d="M7 5l3 3-7 3M11 5l2 7" fill="none" stroke="#b1b2b3"/></svg>
      <svg viewBox="0 0 16 16"><path d="M2 3l6-2 7 3v4l-2 1v4l-3-3-4-1-3 1 1-3z" fill="#cbcaca"/><path d="M4 4l8 4M8 2l5 3" stroke="#383838"/><path d="M1 12l7-3" stroke="#26ba68" stroke-width="2"/><path d="M0 14.500l6-3" stroke="#e42b39" stroke-width="2"/><path d="M6 12l2-1" stroke="#236fe5" stroke-width="2"/></svg>
      <svg viewBox="0 0 16 16"><use href="#teams"/><circle cx="12" cy="12" r="3.500" fill="#c4314b"/></svg>
      <svg viewBox="0 0 16 16"><rect x="5" width="6" height="11" rx="1.500" fill="#fff"/><path d="M3 7v5h10V7M8 12v4M4 15.500h8" fill="none" stroke="#fff" stroke-width="1.300"/></svg>
      <svg viewBox="0 0 16 16"><path d="M4 3h11.500v8.500H4M10 12v3M6 15h8M1 2h4v4H1zM2.500 6v8h3" fill="none" stroke="#fff"/></svg>
      <svg viewBox="0 0 16 16"><path d="M0 5.500h3L6.500 2v12L3 10.500H0zM8.500 6q1.500 2 0 4M11 4q3 4 0 8M13.500 2q4.500 6 0 12" fill="none" stroke="#fff"/></svg>
    </div>
    <span class="lang">ENG</span><span class="clock">4:13 PM</span>
    <svg class="note" viewBox="0 0 16 16"><path d="M.5 1.500h15v11h-5L8 15l-2.500-2.500h-5z" fill="none" stroke="#fff" stroke-width="1.200"/></svg>
    <span class="peek"></span>
  </div>
</div>
</body>
</html>
```
FILE: styles.css
```css
* { box-sizing: border-box; }
body { margin: 0; width: 1920px; height: 1080px; overflow: hidden; display: flex; flex-direction: column; background: #2a2b30; color: #fff; font-family: "Open Sans", "Noto Sans", sans-serif; }
svg { display: block; flex: none; }
span { white-space: nowrap; }
.defs { position: absolute; }
.browser { height: 102px; flex: none; }

.tabstrip { height: 34px; background: #202124; display: flex; align-items: center; padding-left: 8px; }
.tab { height: 34px; width: 239px; border-radius: 8px 8px 0 0; display: flex; align-items: center; padding: 0 9px 0 12px; color: #bdc1c6; }
.tab.first { background: linear-gradient(90deg, #292a2d, #242528 40%); }
.tab.active { background: #35363a; color: #fff; width: 240px; padding-right: 11px; }
.tab.third { width: 238px; padding-left: 11px; padding-right: 10px; }
.fav { width: 16px; height: 16px; }
.title { font-size: 12px; margin-left: 8px; flex: 1; overflow: hidden; line-height: 20px; }
.t1 { letter-spacing: -.2px; }
.t2 { letter-spacing: -.28px; }
.t3 { letter-spacing: -.22px; -webkit-mask-image: linear-gradient(90deg, #000 87%, transparent); mask-image: linear-gradient(90deg, #000 87%, transparent); }
.close { width: 11px; height: 11px; }
.third .close { margin-left: 7px; }
.tabline { width: 1px; height: 20px; background: #55575b; }
.plus { width: 12px; height: 12px; margin-left: 16px; }
.winctl { margin-left: auto; display: flex; align-items: center; padding-right: 18px; }
.wc1 { width: 14px; height: 14px; margin: 0 32px 0 0; }
.wc2, .wc3, .wc4 { width: 10px; height: 10px; margin-top: -6px; }
.wc2, .wc3 { margin-right: 36px; }

.toolbar { height: 36px; background: #35363a; display: flex; align-items: center; padding-left: 14px; }
.nav { width: 16px; height: 16px; margin-right: 16px; }
.omnibox { width: 1704px; height: 28px; margin-left: -2px; border-radius: 14px; background: #202124; display: flex; align-items: center; padding: 0 10px 0 11px; }
.info { width: 14px; height: 14px; }
.url { font-size: 14px; line-height: 20px; margin-left: 9px; color: #8d9296; letter-spacing: -.39px; }
.url b { color: #fff; font-weight: 400; letter-spacing: -.15px; }
.key { width: 15px; height: 9px; margin-left: auto; }
.star { width: 16px; height: 16px; margin-left: 17px; }
.puzzle { width: 16px; height: 16px; margin-left: 14px; }
.avatar { width: 22px; height: 22px; margin-left: 13px; }
.dots { width: 4px; height: 16px; margin-left: 20px; }

.bookmarks { height: 32px; background: #35363a; display: flex; align-items: center; gap: 16px; padding: 0 14px 4px 13px; font-size: 12px; }
.bookmarks svg { width: 16px; height: 16px; }
.bm { display: flex; align-items: center; gap: 8px; line-height: 16px; }
.w-apps { width: 28px; letter-spacing: -.1px; }
.w-star { width: 45px; letter-spacing: -.45px; }
.w-purb { width: 78px; letter-spacing: -.38px; }
.w-web { width: 67px; letter-spacing: -.3px; }
.w-nbr { width: 112px; letter-spacing: -.28px; }
.w-sms { width: 114px; letter-spacing: -.27px; }
.w-swiss { width: 109px; letter-spacing: -.27px; }
.reading { margin-left: auto; display: flex; gap: 8px; padding-left: 11px; border-left: 1px solid #5f6368; line-height: 16px; }
.w-read { width: 62px; letter-spacing: -.28px; }

.page { height: 948px; display: flex; flex-direction: column; font-family: Roboto, sans-serif; }
.header { height: 52px; background: #25262b; display: flex; align-items: center; }
.jumper { width: 24px; height: 34px; margin: -14px 0 0 6px; }
.logo { width: 100px; height: 52px; display: flex; align-items: center; justify-content: center; background: radial-gradient(closest-side, #591722aa, #4a192366 50%, transparent); padding-bottom: 9px; margin-left: 48px; }
.logo svg { width: 45px; height: 28px; overflow: visible; filter: drop-shadow(0 0 2px #d80f29) drop-shadow(0 0 4px #a00c22); }
.session { margin: -3px 0 0 auto; display: flex; align-items: center; padding-right: 20px; color: #e4e4e4; }
.logged { width: 112px; font-size: 19px; letter-spacing: .42px; color: #fff; margin: -2px 36px 0 0; }
.user, .out { display: flex; align-items: center; font-size: 16px; }
.user { margin-right: 37px; gap: 4px; }
.user svg { width: 12px; height: 14px; }
.uname { width: 79px; letter-spacing: .1px; }
.out { gap: 5px; }
.out svg { width: 15px; height: 12px; }
.oname { width: 51px; letter-spacing: .1px; }

.main { height: 845px; display: flex; align-items: flex-start; }
.sidebar { width: 288px; height: 363px; border-right: 2px solid #000; }
.sidebar h3 { margin: 21px 0 36px; text-align: center; font-size: 24px; line-height: 28px; letter-spacing: -.1px; }
ul { margin: 0; padding: 0 0 0 25px; list-style: none; color: #b5b6b8; font-size: 17.500px; }
li { height: 44px; line-height: 28px; letter-spacing: .3px; }
.tight { letter-spacing: .14px; }
.last { margin-top: 16px; letter-spacing: .5px; }
.content { padding: 41px 0 0 19px; }
.content h3 { margin: 0; font-size: 24px; line-height: 28px; letter-spacing: .25px; }
.content h1 { margin: 37px 0 0 5px; font-size: 39px; line-height: 48px; font-weight: 600; letter-spacing: .45px; color: #add0dc; }
.footer { height: 51px; background: #25262a; display: flex; align-items: center; justify-content: center; gap: 4px; font-size: 16px; }
.copy { width: 301px; letter-spacing: .08px; }
.brand { width: 124px; letter-spacing: -.06px; color: #a9aaac; }

.taskbar { position: relative; height: 30px; background: #060807; display: flex; justify-content: space-between; }
.rain { position: absolute; left: 0; top: 0; width: 1920px; height: 30px; font: 13px "Noto Sans CJK JP", sans-serif; }
.launch, .tray { position: relative; display: flex; align-items: center; }
.launch i { width: 37px; height: 30px; display: flex; align-items: center; justify-content: center; padding-top: 2px; border-bottom: 2px solid transparent; }
.launch .sys { width: 36px; }
.launch .sys:nth-child(3) { width: 38px; }
.launch svg, .icons svg { width: 16px; height: 16px; }
.launch .run { width: 28px; margin: 0 4px 0 5px; border-bottom-color: #76b9ed; }
.launch .current { width: 36px; margin: 0 1px 0 0; background: #3b3d3c; }
.ps { font: 8.500px "Open Sans", sans-serif; fill: #31a8ff; }
.tray { font-size: 12px; }
.weather { width: 21px; height: 20px; margin-right: 10px; }
.temp { width: 29px; margin-right: 9px; font-size: 13px; letter-spacing: -.1px; }
.sky { width: 28px; margin-right: 7px; font-size: 13px; letter-spacing: -.1px; }
.icons { display: flex; gap: 8px; }
.lang { width: 24px; margin-left: 10px; letter-spacing: -.5px; }
.clock { width: 44px; margin-left: 14px; letter-spacing: -.25px; }
.note { width: 16px; height: 16px; margin-left: 21px; }
.peek { width: 1px; height: 30px; margin: 0 4px 0 20px; background: #4a4d4b; }
```
